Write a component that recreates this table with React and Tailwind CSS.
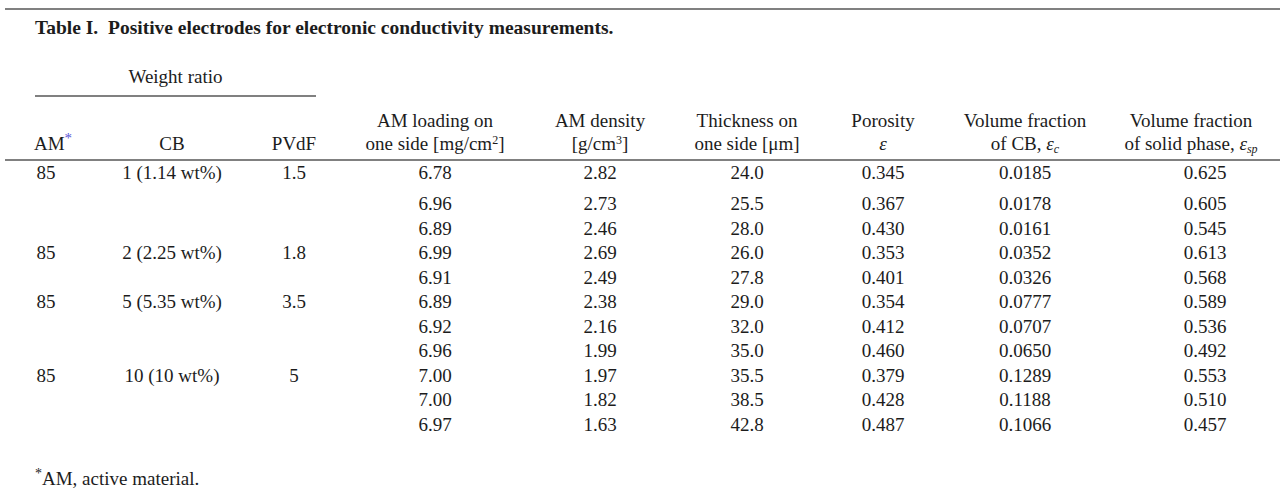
import React from "react";

const GRID = "grid grid-cols-[82px_170px_74px_208px_122px_172px_100px_184px_176px]";

const rows = [
  ["85", "1 (1.14 wt%)", "1.5", "6.78", "2.82", "24.0", "0.345", "0.0185", "0.625"],
  ["", "", "", "6.96", "2.73", "25.5", "0.367", "0.0178", "0.605"],
  ["", "", "", "6.89", "2.46", "28.0", "0.430", "0.0161", "0.545"],
  ["85", "2 (2.25 wt%)", "1.8", "6.99", "2.69", "26.0", "0.353", "0.0352", "0.613"],
  ["", "", "", "6.91", "2.49", "27.8", "0.401", "0.0326", "0.568"],
  ["85", "5 (5.35 wt%)", "3.5", "6.89", "2.38", "29.0", "0.354", "0.0777", "0.589"],
  ["", "", "", "6.92", "2.16", "32.0", "0.412", "0.0707", "0.536"],
  ["", "", "", "6.96", "1.99", "35.0", "0.460", "0.0650", "0.492"],
  ["85", "10 (10 wt%)", "5", "7.00", "1.97", "35.5", "0.379", "0.1289", "0.553"],
  ["", "", "", "7.00", "1.82", "38.5", "0.428", "0.1188", "0.510"],
  ["", "", "", "6.97", "1.63", "42.8", "0.487", "0.1066", "0.457"],
];

const Head = ({ children, className = "" }) => (
  <div className={"flex flex-col items-center justify-end whitespace-nowrap " + className}>
    {children}
  </div>
);

const Eps = ({ sub }) => (
  <span>
    <i>ε</i>
    {sub && <sub className="text-[12px]"><i>{sub}</i></sub>}
  </span>
);

const App = () => {
  return (
    <div className="w-full h-[494px] overflow-hidden bg-white pl-[5px] pt-[8px] font-['Liberation_Serif',serif] text-[19px] text-[#1c1c1c]">
      <div className="h-[2px] bg-[#808080]" />

      <div className="mt-[6px] ml-[30px] text-[19.5px] leading-[24px] font-bold whitespace-nowrap">
        Table I.&nbsp; Positive electrodes for electronic conductivity measurements.
      </div>

      <div className="mt-[25px] ml-[30px] w-[281px]">
        <div className="text-center leading-[24px]">Weight ratio</div>
        <div className="mt-[6px] h-[2px] bg-[#808080]" />
      </div>

      <div className={GRID + " mt-[12px] leading-[23px] h-[46px]"}>
        <Head className="pl-[14px]">
          <span>
            AM<sup className="text-[15px] text-[#5a55d6]">*</sup>
          </span>
        </Head>
        <Head>CB</Head>
        <Head>PVdF</Head>
        <Head>
          <span>AM loading on</span>
          <span>
            one side [mg/cm<sup className="text-[12px]">2</sup>]
          </span>
        </Head>
        <Head>
          <span>AM density</span>
          <span>
            [g/cm<sup className="text-[12px]">3</sup>]
          </span>
        </Head>
        <Head>
          <span>Thickness on</span>
          <span>one side [μm]</span>
        </Head>
        <Head>
          <span>Porosity</span>
          <Eps />
        </Head>
        <Head>
          <span>Volume fraction</span>
          <span>
            of CB, <Eps sub="c" />
          </span>
        </Head>
        <Head className="pr-[28px]">
          <span>Volume fraction</span>
          <span>
            of solid phase, <Eps sub="sp" />
          </span>
        </Head>
      </div>

      <div className="mt-[4px] h-[2px] bg-[#808080]" />

      <div className="leading-[24.5px]">
        {rows.map((row, i) => (
          <div key={i} className={GRID + (i === 0 ? " h-[31px]" : " h-[24.5px]")}>
            {row.map((cell, j) => (
              <div key={j} className="text-center whitespace-nowrap">
                {cell}
              </div>
            ))}
          </div>
        ))}
      </div>

      <div className="mt-[30px] ml-[30px] leading-[24px]">
        <sup className="text-[14px]">*</sup>AM, active material.
      </div>
    </div>
  );
};

export default App;
